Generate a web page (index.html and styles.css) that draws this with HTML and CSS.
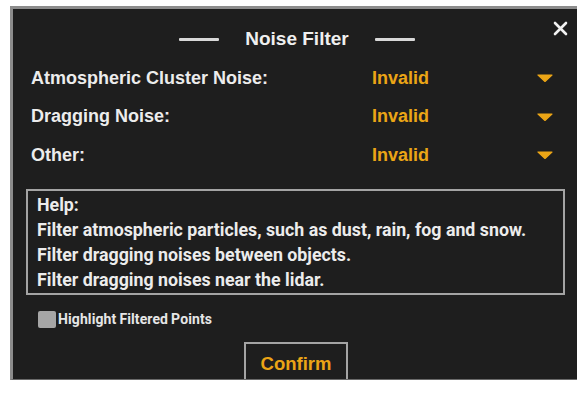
FILE: index.html
```html
<!DOCTYPE html>
<html>
<head>
<meta charset="utf-8">
<link rel="stylesheet" href="styles.css">
</head>
<body>
<div class="dialog">
  <div class="header">
    <span class="rule"></span>
    <span class="title">Noise Filter</span>
    <span class="rule"></span>
  </div>
  <button class="close" aria-label="Close">
    <svg width="15" height="15" viewBox="0 0 15 15"><path d="M2 2 L13 13 M13 2 L2 13" stroke="#f2f2f2" stroke-width="2.6" stroke-linecap="round"/></svg>
  </button>
  <div class="rows">
    <div class="row">
      <span class="label">Atmospheric Cluster Noise:</span>
      <span class="value">Invalid</span>
      <svg class="caret" width="16" height="8" viewBox="0 0 16 8"><path d="M1 1 L15 1 L8 7.5 Z" fill="#eba516" stroke="#eba516" stroke-width="1.2" stroke-linejoin="round"/></svg>
    </div>
    <div class="row">
      <span class="label">Dragging Noise:</span>
      <span class="value">Invalid</span>
      <svg class="caret" width="16" height="8" viewBox="0 0 16 8"><path d="M1 1 L15 1 L8 7.5 Z" fill="#eba516" stroke="#eba516" stroke-width="1.2" stroke-linejoin="round"/></svg>
    </div>
    <div class="row">
      <span class="label">Other:</span>
      <span class="value">Invalid</span>
      <svg class="caret" width="16" height="8" viewBox="0 0 16 8"><path d="M1 1 L15 1 L8 7.5 Z" fill="#eba516" stroke="#eba516" stroke-width="1.2" stroke-linejoin="round"/></svg>
    </div>
  </div>
  <div class="help">
    <p>Help:</p>
    <p>Filter atmospheric particles, such as dust, rain, fog and snow.</p>
    <p>Filter dragging noises between objects.</p>
    <p>Filter dragging noises near the lidar.</p>
  </div>
  <label class="check">
    <span class="box"></span>
    <span class="check-text">Highlight Filtered Points</span>
  </label>
  <div class="actions">
    <button class="confirm">Confirm</button>
  </div>
</div>
</body>
</html>
```
FILE: styles.css
```css
html, body {
  margin: 0;
  padding: 0;
  background: #ffffff;
}
body {
  width: 585px;
  height: 396px;
  overflow: hidden;
  font-family: "Liberation Sans", Arial, sans-serif;
}
.dialog {
  position: relative;
  margin: 6px 0 0 10px;
  width: 567px;
  height: 374px;
  box-sizing: border-box;
  background: #1e1e1e;
  border-top: 3px solid #8c8c8c;
  border-left: 3px solid #8c8c8c;
  border-bottom: 1px solid #6a6a6a;
  overflow: hidden;
  display: flex;
  flex-direction: column;
  color: #ececec;
}
.header {
  display: flex;
  align-items: center;
  justify-content: center;
  gap: 26px;
  padding-top: 19px;
  height: 22px;
  padding-left: 4px;
}
.rule {
  width: 40px;
  height: 3px;
  background: #d8d8d8;
  border-radius: 1px;
}
.title {
  font-size: 19px;
  font-weight: 700;
  line-height: 22px;
  color: #efefef;
}
.close {
  position: absolute;
  top: 12px;
  right: 9px;
  width: 15px;
  height: 15px;
  padding: 0;
  border: 0;
  background: none;
  display: flex;
}
.rows {
  margin-top: 9px;
  padding: 0 24px 0 18px;
  display: flex;
  flex-direction: column;
}
.row {
  height: 38.5px;
  display: grid;
  grid-template-columns: 341px 1fr 16px;
  align-items: center;
  font-size: 18px;
  font-weight: 700;
}
.label {
  color: #ececec;
}
.value {
  color: #eba516;
}
.caret {
  display: block;
}
.help {
  margin: 14px 0 0 13px;
  width: 539px;
  height: 109px;
  box-sizing: border-box;
  border: 2px solid #a4a4a4;
  padding: 1px 0 0 9px;
}
.help p {
  margin: 0;
  font-family: Roboto, "Liberation Sans", sans-serif;
  font-size: 17.8px;
  font-weight: 700;
  line-height: 25.3px;
  color: #ececec;
  white-space: nowrap;
}
.check {
  margin: 16px 0 0 25px;
  display: flex;
  align-items: center;
  gap: 2px;
}
.box {
  width: 18px;
  height: 17px;
  background: #a6a6a6;
  border-radius: 2px;
}
.check-text {
  font-family: Roboto, "Liberation Sans", sans-serif;
  font-size: 14px;
  font-weight: 700;
  letter-spacing: 0.1px;
  word-spacing: -0.5px;
  color: #e6e6e6;
}
.actions {
  display: flex;
  justify-content: center;
  margin-top: 14px;
  padding-left: 2px;
}
.confirm {
  width: 104px;
  height: 46px;
  box-sizing: border-box;
  background: #1e1e1e;
  border: 2px solid #a4a4a4;
  color: #eba516;
  font-family: "Liberation Sans", Arial, sans-serif;
  font-size: 18.5px;
  font-weight: 700;
  padding: 0 0 2px 0;
}
```
